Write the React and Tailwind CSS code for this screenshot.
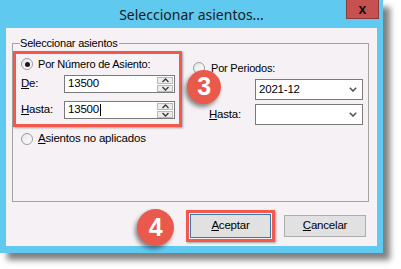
const UI = { fontFamily: '"Liberation Sans", Arial, sans-serif' };

function Radio({ checked }) {
  return (
    <span className="flex h-[12px] w-[12px] shrink-0 items-center justify-center rounded-full border border-[#9c9c9c] bg-gradient-to-br from-[#e6e6e6] to-white">
      {checked && <span className="h-[5px] w-[5px] rounded-full bg-[#1a1a1a]" />}
    </span>
  );
}

function Chevron({ up }) {
  return (
    <svg width="7" height="5" viewBox="0 0 7 5" className="block">
      <path
        d={up ? "M0.5 4 L3.5 1 L6.5 4" : "M0.5 1 L3.5 4 L6.5 1"}
        fill="none"
        stroke="#3a3a3a"
        strokeWidth="1.4"
      />
    </svg>
  );
}

function SpinInput({ value, caret }) {
  return (
    <div className="flex h-[18px] w-[111px] items-stretch border border-[#7a7a7a] bg-white">
      <div className="flex flex-1 items-center pl-[3px] text-[11.5px] leading-none text-black">
        {value}
        {caret && <span className="ml-[1px] h-[12px] w-[1px] bg-black" />}
      </div>
      <div className="flex w-[17px] flex-col gap-[1px] py-[1px] pr-[1px]">
        <div className="flex flex-1 items-center justify-center border border-[#b9b9b9] bg-[#ececec]">
          <Chevron up />
        </div>
        <div className="flex flex-1 items-center justify-center border border-[#b9b9b9] bg-[#ececec]">
          <Chevron />
        </div>
      </div>
    </div>
  );
}

function Combo({ value }) {
  return (
    <div className="flex h-[21px] w-[108px] items-center justify-between border border-[#7a7a7a] bg-white pl-[3px] pr-[5px] text-[11.5px] text-black">
      <span>{value}</span>
      <svg width="8" height="5" viewBox="0 0 8 5">
        <path d="M0.8 0.8 L4 4 L7.2 0.8" fill="none" stroke="#555" strokeWidth="1.6" />
      </svg>
    </div>
  );
}

function Badge({ n, className }) {
  return (
    <div
      className={`absolute z-10 flex items-center justify-center rounded-full bg-[#ea5a4c] text-[25px] font-bold text-white shadow-[-2px_3px_4px_rgba(0,0,0,0.45)] ${className}`}
      style={UI}
    >
      {n}
    </div>
  );
}

export default function App() {
  return (
    <div className="h-[269px] w-[401px] overflow-hidden bg-white" style={UI}>
      <div className="flex h-[253px] w-[383px] flex-col bg-[#60c9ef] shadow-[7px_7px_6px_rgba(0,0,0,0.5)]">
        <div className="relative flex h-[28px] items-center justify-center">
          <span
            className="text-[14px] text-[#1a1a1a]"
            style={{ fontFamily: '"Noto Sans", "Open Sans", sans-serif' }}
          >
            Seleccionar asientos...
          </span>
          <div className="absolute right-[4px] top-0 flex h-[19px] w-[33px] items-center justify-center border border-t-0 border-[#8a3a3a] bg-[#c75050] text-[14px] font-bold leading-none text-[#111]">
            x
          </div>
        </div>

        <div className="relative mx-[6px] h-[218px] bg-[#f5f1f5] text-[11px] tracking-[-0.2px] text-black">
          <div className="relative ml-[6px] mr-[8px] mt-[15px] h-[159px] border border-[#a3a3a3]">
            <span className="absolute -top-[8px] left-[7px] bg-[#f5f1f5] pr-[1px] text-[11px] leading-[14px]">
              Seleccionar asientos
            </span>

            <div className="mt-[7px] flex">
              <div className="h-[76px] w-[169px] border-[3px] border-[#f0594b] shadow-[1px_1px_2px_rgba(0,0,0,0.35)]">
                <div className="ml-[5px] mt-[4px] flex h-[12px] items-center gap-[5px]">
                  <Radio checked />
                  <span>Por Número de Asiento:</span>
                </div>
                <div className="ml-[5px] mt-[5px] flex items-center">
                  <span className="w-[43px] text-[11.5px]">
                    <u>D</u>e:
                  </span>
                  <SpinInput value="13500" />
                </div>
                <div className="ml-[5px] mt-[8px] flex items-center">
                  <span className="w-[43px] text-[11.5px]">
                    <u>H</u>asta:
                  </span>
                  <SpinInput value="13500" caret />
                </div>
              </div>

              <div className="ml-[11px] flex-1">
                <div className="mt-[11px] flex h-[12px] items-center gap-[6px]">
                  <Radio />
                  <span>Por Periodos:</span>
                </div>
                <div className="mt-[5px] flex items-center">
                  <span className="ml-[7px] w-[55px] text-[11.5px]">
                    <u>D</u>e:
                  </span>
                  <Combo value="2021-12" />
                </div>
                <div className="mt-[4px] flex items-center">
                  <span className="ml-[16px] w-[46px] text-[11.5px]">
                    <u>H</u>asta:
                  </span>
                  <Combo value="" />
                </div>
              </div>
            </div>

            <div className="ml-[8px] mt-[6px] flex h-[12px] items-center gap-[5px]">
              <Radio />
              <span className="text-[11.5px]">
                <u>A</u>sientos no aplicados
              </span>
            </div>
          </div>

          <div className="mr-[11px] mt-[8px] flex items-center justify-end gap-[9px]">
            <div className="border-[3px] border-[#f0594b] p-[1px] shadow-[1px_1px_2px_rgba(0,0,0,0.35)]">
              <div className="flex h-[24px] w-[81px] items-center justify-center border border-[#3a78ac] bg-[#e1e1e1] text-[11.5px]">
                <span>
                  <u>A</u>ceptar
                </span>
              </div>
            </div>
            <div className="flex h-[22px] w-[82px] items-center justify-center border border-[#adadad] bg-[#e1e1e1] text-[11.5px]">
              <span>
                <u>C</u>ancelar
              </span>
            </div>
          </div>

          <Badge n="3" className="left-[181px] top-[42px] h-[34px] w-[34px]" />
          <Badge n="4" className="left-[131px] top-[181px] h-[37px] w-[37px]" />
        </div>
      </div>
    </div>
  );
}
